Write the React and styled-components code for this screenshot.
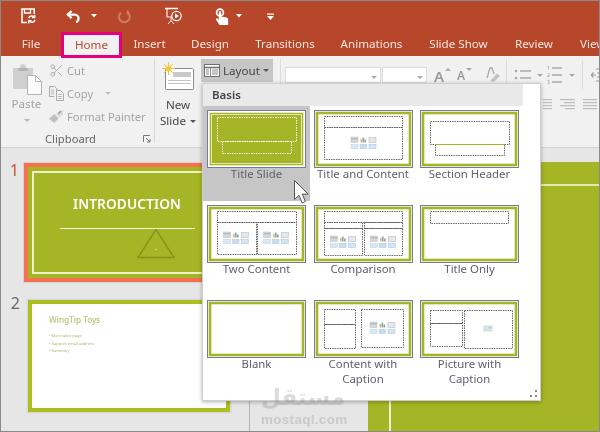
import React from "react";
import styled, { createGlobalStyle } from "styled-components";
import { Scissors } from "lucide-react";

const Global = createGlobalStyle`
  html, body { margin: 0; padding: 0; background: #fff; }
  * { box-sizing: border-box; }
`;

const FONT = `"Noto Sans", "Open Sans", sans-serif`;
const GREEN = "#a6b525";
const RED = "#b7472a";

const Screen = styled.div`
  position: relative; width: 600px; height: 432px; overflow: hidden;
  border: 1px solid #8a8a8a; background: #e6e6e6;
  font-family: ${FONT}; display: flex; flex-direction: column;
  filter: blur(0.35px);
`;
const TitleBar = styled.header`
  background: ${RED}; height: 55px; flex: none; display: flex; flex-direction: column;
`;
const Qat = styled.div`
  height: 30px; display: flex; align-items: center; padding-left: 20px;
`;
const QatIcon = styled.svg`
  flex: none; margin-left: ${p => p.$ml || 0}px; display: block;
`;
const Tabs = styled.nav`
  height: 25px; display: flex; font-size: 11.6px; color: #f8e6e0;
`;
const Tab = styled.div`
  flex: none; width: ${p => p.$w}px; height: 25px; display: flex; align-items: center;
  justify-content: center; white-space: nowrap;
`;
const ActiveTab = styled(Tab)`
  height: 26px; margin-top: 1px; padding-bottom: 1px; background: #f1f1f1; color: ${RED};
  border: 3px solid #e6007e; position: relative; z-index: 2;
`;
const EdgeTab = styled(Tab)`
  justify-content: flex-start; padding-left: 13px;
`;
const Ribbon = styled.section`
  height: 92px; flex: none; background: #f1f1f1; border-bottom: 1px solid #d3d3d3;
  display: flex; align-items: flex-start; font-size: 11.6px; color: #a3a3a3;
`;
const ClipboardGroup = styled.div`
  width: 154px; height: 84px; margin-top: 3px; flex: none; border-right: 1px solid #d8d8d8;
  display: flex; flex-direction: column;
`;
const ClipboardBody = styled.div`
  display: flex; height: 69px;
`;
const PasteCol = styled.div`
  width: 48px; flex: none; display: flex; flex-direction: column; align-items: center;
  padding-top: 5px; padding-left: 3px; line-height: 16px;
`;
const PasteLabel = styled.span`
  margin: 1px 0 7px;
`;
const ClipRows = styled.div`
  display: flex; flex-direction: column;
`;
const ClipRow = styled.div`
  height: 23px; display: flex; align-items: center; gap: 3px; white-space: nowrap; font-size: 11.2px;
`;
const GroupLabel = styled.div`
  position: relative; text-align: center; font-size: 11.2px; color: #666; line-height: 16px;
  margin-top: 3px; padding-right: 14px;
`;
const Launcher = styled.svg`
  position: absolute; right: 3px; top: 4px;
`;
const NewCol = styled.div`
  width: 43px; margin-top: 6px; flex: none; display: flex; flex-direction: column; align-items: center;
  color: #444; line-height: 16px; padding-left: 3px;
`;
const NewLabel = styled.span`
  margin-top: 7px;
`;
const LayoutBtn = styled.div`
  width: 72px; height: 23px; margin: 3px 0 0 3px; flex: none; background: #c6c6c6;
  display: flex; align-items: center; gap: 3px; padding-left: 3px; color: #444;
`;
const Caret = styled.span`
  display: inline-block; flex: none; width: 0; height: 0; margin-left: ${p => p.$ml || 0}px;
  border-left: 3px solid transparent; border-right: 3px solid transparent;
  border-top: 3px solid ${p => p.$c || "#555"};
  vertical-align: ${p => (p.$inline ? "2px" : "baseline")};
  margin-top: ${p => p.$mt || 0}px;
  transform: ${p => (p.$up ? "rotate(180deg)" : "none")};
`;
const FontGroup = styled.div`
  margin: 3px 0 0 7px; height: 84px; width: 227px; flex: none; border-left: 1px solid #dcdcdc;
  border-right: 1px solid #dcdcdc; padding: 8px 0 0 4px; display: flex; align-items: flex-start;
`;
const SelectBox = styled.div`
  height: 16px; width: ${p => p.$w}px; margin-right: 1px; background: #fff; border: 1px solid #dcdcdc;
  display: flex; align-items: flex-end; justify-content: flex-end; padding: 0 3px 3px 0; flex: none;
`;
const GrowA = styled.span`
  display: flex; align-items: flex-start; width: ${p => p.$w}px; margin-left: ${p => p.$ml || 0}px;
  font-size: ${p => p.$s}px; line-height: 18px; color: #9a9a9a; font-weight: 600; flex: none; gap: 1px;
`;
const ParaGroup = styled.div`
  flex: 1; display: flex; flex-direction: column; padding-top: 9px;
`;
const ParaRow = styled.div`
  display: flex; align-items: center; padding-left: 7px; height: 20px;
`;
const ParaGap = styled.span`
  width: 4px; flex: none;
`;
const AlignRow = styled.div`
  display: flex; justify-content: flex-end; gap: 8px; padding-right: 6px; margin-top: 14px;
`;
const IndentSlot = styled.div`
  margin-left: 7px; padding-left: 8px; border-left: 1px solid #dcdcdc; height: 28px; display: flex; align-items: center;
`;
const Workspace = styled.main`
  flex: 1; display: flex; min-height: 0;
`;
const ThumbPane = styled.aside`
  width: 249px; flex: none; background: #e6e6e6; border-right: 1px solid #b4b4b4;
  padding-top: 15px; display: flex; flex-direction: column; gap: 18px;
`;
const ThumbRow = styled.div`
  display: flex; align-items: flex-start;
`;
const SlideNo = styled.span`
  width: ${p => p.$w}px; flex: none; text-align: right; padding-right: ${p => p.$pr}px; font-size: 16px; line-height: 16px;
  margin-top: ${p => p.$mt}px; color: ${p => p.$c};
`;
const SlideOne = styled.div`
  width: 206px; height: 119px; background: ${GREEN}; border: 4px solid #f6714f; padding: 4px;
  box-shadow: 0 0 0 1px #d4d4d4; flex: none;
`;
const SlideOneFrame = styled.div`
  height: 103px; border: 2px solid #eef2c8; display: flex; flex-direction: column; align-items: center; padding-top: 22px;
`;
const SlideOneTitle = styled.div`
  color: #fff; font-size: 13.7px; font-weight: 600; line-height: 18px; letter-spacing: 0.1px;
`;
const SlideOneRule = styled.div`
  width: 135px; height: 1px; background: #f0f3cf; margin-top: 15px;
`;
const Triangle = styled.svg`
  align-self: flex-start; margin-left: 103px; display: block;
`;
const SlideTwo = styled.div`
  width: 202px; height: 112px; background: #fff; border: 4px solid #aebe22; flex: none;
  box-shadow: 0 0 0 1.5px #d8d8d8; padding: 10px 0 0 17px; color: #b7c272;
`;
const SlideTwoTitle = styled.div`
  font-size: 8.2px; line-height: 12px; margin-bottom: 6px; font-weight: 500;
`;
const SlideTwoItem = styled.div`
  font-size: 4px; line-height: 7.5px; white-space: nowrap; color: #a9b56a;
`;
const MainPane = styled.div`
  flex: 1; display: flex; flex-direction: column; min-width: 0; padding-top: 14px;
`;
const MainRow = styled.div`
  flex: 1; display: flex; padding-left: 118px;
`;
const BigSlide = styled.div`
  flex: 1; background: ${GREEN}; padding: 22px 0 0 21px; display: flex;
`;
const BigSlideFrame = styled.div`
  flex: 1; border-top: 2px solid #e4e9b4; border-left: 2px solid #eef1d0;
`;
const Menu = styled.div`
  position: absolute; left: 201px; top: 82px; width: 339px; height: 318px; background: #fff; z-index: 3;
  border: 1px solid #cfcfcf; box-shadow: 0 1px 4px rgba(0,0,0,.3);
  display: flex; flex-direction: column;
`;
const MenuHead = styled.div`
  width: 320px; height: 22px; flex: none; background: #e9e9e9; color: #444; font-size: 11.5px; font-weight: 600;
  line-height: 22px; padding-left: 9px;
`;
const LayoutGrid = styled.div`
  display: grid; grid-template-columns: 107px 106px 107px; grid-auto-rows: 95px;
`;
const LayoutCell = styled.div`
  position: relative; display: flex; flex-direction: column; align-items: center; padding-top: 4px;
  background: ${p => (p.$active ? "#c6c6c6" : "transparent")};
`;
const ThumbSvg = styled.svg`
  display: block; flex: none;
`;
const Caption = styled.div`
  font-size: 11.4px; line-height: 15px; margin-top: -2px; text-align: center; color: #5c5f6e; width: 100px;
`;
const Cursor = styled.svg`
  position: absolute; left: 91px; top: 74px; z-index: 4;
`;
const Grip = styled.svg`
  position: absolute; right: 2px; bottom: 2px;
`;
const Watermark = styled.div`
  position: absolute; left: 260px; top: 383px; width: 79px; z-index: 5; text-align: center;
  color: rgba(130,130,130,.28); font-family: "DejaVu Sans", ${FONT}; font-weight: 700;
`;
const WmArabic = styled.div`
  font-size: 23px; line-height: 26px; margin-bottom: 3px;
`;
const WmLatin = styled.div`
  font-family: "Liberation Sans", sans-serif; font-size: 13.4px; line-height: 14px; letter-spacing: 0.35px;
`;

const DASH = "#5f5f5f";
const ContentGlyphs = ({ x, y }) => (
  <g transform={`translate(${x} ${y})`}>
    <rect x="0" y="0" width="7" height="5.5" fill="#d4d8da" stroke="#b9bfc2" strokeWidth=".5" />
    <rect x="0" y="1.3" width="7" height="1" fill="#aab0b4" />
    <rect x="9.5" y="2" width="1.6" height="3.5" fill="#e8b93a" />
    <rect x="11.5" y="0.5" width="1.6" height="5" fill="#7ea6cc" />
    <rect x="13.5" y="2.5" width="1.6" height="3" fill="#9a9a9a" />
    <rect x="18" y="0.5" width="7" height="5" fill="#e4e8ea" stroke="#aeb4b8" strokeWidth=".5" />
    <rect x="0" y="7.5" width="7" height="4" fill="#dbe7f2" stroke="#b8cfe2" strokeWidth=".5" />
    <rect x="9" y="7.5" width="6.5" height="4" fill="#c7dcef" stroke="#a9c7e2" strokeWidth=".5" />
    <rect x="18" y="7.5" width="7" height="4" fill="#d6e5f2" stroke="#9cc0de" strokeWidth=".5" />
  </g>
);

const LAYOUTS = [
  { name: "Title Slide", fill: true, boxes: [[10, 7, 79, 24], [15, 31, 69, 12]] },
  { name: "Title and Content", boxes: [[10, 6, 78, 11], [10, 17, 78, 32]], glyphs: [[37, 27]] },
  { name: "Section Header", boxes: [[10, 11, 79, 23], [15, 34, 69, 11]], rule: [15, 84, 34] },
  { name: "Two Content", boxes: [[10, 6, 79, 11], [10, 17, 39, 32], [50, 17, 39, 32]], glyphs: [[16.5, 27], [56.5, 27]] },
  { name: "Comparison", boxes: [[10, 6, 78, 11], [10, 17, 38, 6], [50, 17, 38, 6], [10, 23, 38, 27], [50, 23, 38, 27]], glyphs: [[16.5, 31], [56.5, 31]] },
  { name: "Title Only", boxes: [[10, 6, 78, 12]] },
  { name: "Blank", boxes: [] },
  { name: ["Content with", "Caption"], boxes: [[10, 9, 31, 15], [10, 24, 31, 24], [47, 9, 42, 38]], glyphs: [[56, 22]] },
  { name: ["Picture with", "Caption"], boxes: [[10, 10, 32, 13], [10, 23, 32, 23], [44, 10, 48, 38]], pic: [64, 26] },
];

const LayoutThumb = ({ fill, boxes, rule, glyphs, pic }) => (
  <ThumbSvg width="99" height="58" viewBox="0 0 99 58">
    <rect x=".5" y=".5" width="98" height="57" fill="#fff" stroke="#757c98" />
    <rect x="3" y="3" width="93" height="52" fill={fill ? GREEN : "#fff"} stroke={fill ? "none" : "#a6b525"} strokeWidth="2.6" />
    {fill && <rect x="2.5" y="2.5" width="94" height="53" fill={GREEN} stroke="#e9eec0" strokeWidth="1" />}
    {fill && <rect x="4.5" y="4.5" width="90" height="49" fill={GREEN} stroke="#f1f4d6" strokeWidth=".8" />}
    {boxes.map((b, i) => (
      <rect key={i} x={b[0] + .5} y={b[1] + .5} width={b[2]} height={b[3]} fill="none"
        stroke={fill ? "#fff" : DASH} strokeWidth="1" strokeDasharray="1.4 1" />
    ))}
    {rule && <line x1={rule[0]} x2={rule[1]} y1={rule[2] + .5} y2={rule[2] + .5} stroke={GREEN} strokeWidth="1" />}
    {glyphs && glyphs.map((g, i) => <ContentGlyphs key={i} x={g[0]} y={g[1]} />)}
    {pic && (
      <g>
        <rect x={pic[0]} y={pic[1]} width="8" height="5" fill="#d6e5f2" stroke="#b1c9de" strokeWidth=".6" />
        <rect x={pic[0] + 4.5} y={pic[1] + 1} width="2.5" height="1.6" fill="#e8c860" />
      </g>
    )}
  </ThumbSvg>
);

const SaveIcon = () => (
  <QatIcon width="15" height="16" viewBox="0 0 15 16" fill="none" stroke="#fff">
    <path d="M6 14.5H1V1h12.2v5" strokeWidth="1.6" />
    <path d="M3.5 1v4h6V1" strokeWidth="1.3" />
    <path d="M7.6 10.2a3.3 3.3 0 0 1 5.6-1.2M14 12a3.3 3.3 0 0 1-5.6 1.2" strokeWidth="1.5" />
    <path d="M13.8 6.8v2.8h-2.8M7.7 15.4v-2.8h2.8" strokeWidth="1.2" />
  </QatIcon>
);
const UndoIcon = () => (
  <QatIcon $ml={30} width="15" height="13" viewBox="0 0 15 13" fill="none" stroke="#fff" strokeWidth="2.3">
    <path d="M5.6 1 1.8 4.6l3.8 3.6" />
    <path d="M2 4.6h6.6a4 4 0 0 1 4 4c0 1.8-1.1 3.2-2.6 3.6" />
  </QatIcon>
);
const RedoIcon = () => (
  <QatIcon $ml={21} width="13" height="14" viewBox="0 0 13 14" fill="none" stroke="#cf7c64" strokeWidth="2">
    <path d="M8.7 3A5.4 5.4 0 1 1 3 3.6" />
    <path d="M9.8 1v4.5H12" fill="#cf7c64" strokeWidth="1" />
  </QatIcon>
);
const PresenterIcon = () => (
  <QatIcon $ml={34} width="17" height="18" viewBox="0 0 17 18" fill="none" stroke="#fff">
    <path d="M0 1.5h13" strokeWidth="1.5" />
    <path d="M2 1.5v8.5h5" strokeWidth="1.1" />
    <path d="M6 10v3.5M6 13.5l-3 3.5M6 13.5l3 3.5" strokeWidth="1" />
    <circle cx="11.5" cy="9" r="4.7" strokeWidth="1.2" />
    <path d="M10 6.5v5l4-2.5z" fill="#fff" stroke="none" />
  </QatIcon>
);
const TouchIcon = () => (
  <QatIcon $ml={33} width="14" height="17" viewBox="0 0 14 17" fill="none">
    <circle cx="5" cy="4.5" r="3.4" stroke="#fff" strokeWidth="1.7" />
    <path d="M3.8 4.2c0-1.4 2.4-1.4 2.4 0v4.2l5.2 1.2c1.2.3 1.8 1 1.8 2.2V17H4.6L1 11.8c-.5-1 .8-2 1.6-1.2l1.2 1.1z" fill="#fff" />
  </QatIcon>
);
const QatCaret = ({ ml }) => (
  <QatIcon $ml={ml} width="6" height="4" viewBox="0 0 6 4"><path d="M0 0h6L3 3.5z" fill="#fff" /></QatIcon>
);
const CustomizeIcon = () => (
  <QatIcon $ml={25} width="7" height="7" viewBox="0 0 7 7">
    <path d="M0 .5h7v1.3H0zM0 3h7L3.5 7z" fill="#fff" />
  </QatIcon>
);

const PasteIcon = () => (
  <svg width="30" height="31" viewBox="0 0 30 31" style={{ display: "block" }}>
    <path d="M1 4h7V2.5C8 1 9.5 0 11 0s3 1 3 2.5V4h7v21H1z" fill="#cfcfcf" />
    <path d="M6 4h10v3H6z" fill="#b5b5b5" />
    <path d="M15.5 11.5h8l6 6v13h-14z" fill="#fbfbfb" stroke="#b4b4b4" />
    <path d="M23.5 11.5v6h6" fill="none" stroke="#b4b4b4" />
  </svg>
);
const CopyIcon = () => (
  <svg width="15" height="15" viewBox="0 0 15 15" fill="none" stroke="#a9a9a9" style={{ display: "block" }}>
    <path d="M5 10.5H.5V.5h5l2 2v1.5" />
    <path d="M7.5 4.5h4l3 3v7h-7z" fill="#f5f5f5" />
    <path d="M2 4h3M2 6h3M2 8h3M9 8.5h4M9 10.5h4M9 12.5h4" strokeWidth=".8" />
  </svg>
);
const BrushIcon = () => (
  <svg width="15" height="13" viewBox="0 0 15 13" style={{ display: "block" }}>
    <path d="M0 8.5 5.5 4l4 4.5L5 13z" fill="#bfbfbf" />
    <path d="M7 4l3-2.5 4.5-1.5-1 4.5L10 7.5z" fill="#d8d8d8" />
    <path d="M9.5 3.5 12 1" stroke="#999" strokeWidth="1.5" />
  </svg>
);
const NewSlideIcon = () => (
  <svg width="32" height="28" viewBox="0 0 32 28" style={{ display: "block" }}>
    <rect x="3.5" y="6.5" width="28" height="21" rx="1" fill="#fff" stroke="#8b8b8b" />
    <rect x="11" y="10" width="18" height="5" fill="#c9c9c9" />
    <path d="M6 18.5h23M6 21.5h23" stroke="#c4c4c4" />
    <circle cx="6.5" cy="6.5" r="3.2" fill="#f6d95c" />
    <path d="M6.5 0v13M0 6.5h13M2 2l9 9M11 2l-9 9" stroke="#eec63f" strokeWidth="1" />
  </svg>
);
const LayoutIcon = () => (
  <svg width="16" height="13" viewBox="0 0 16 13" fill="none" stroke="#6e6e6e" style={{ display: "block" }}>
    <rect x=".5" y=".5" width="15" height="12" fill="#fff" />
    <path d="M.5 3.5h15" strokeWidth="1.5" />
    <path d="M6.5 4v8.5M2 6h3M2 8h3M2 10h3M8 6h6M8 8h6M8 10h6" strokeWidth=".8" />
  </svg>
);
const BulletIcon = () => (
  <svg width="18" height="14" viewBox="0 0 18 14" fill="none" stroke="#a9a9a9" style={{ display: "block" }}>
    <path d="M6 3h11M6 10h11" strokeWidth="1.3" />
    <circle cx="2" cy="3" r="1.3" fill="#a9a9a9" stroke="none" />
    <circle cx="2" cy="10" r="1.3" fill="#a9a9a9" stroke="none" />
  </svg>
);
const NumberIcon = () => (
  <svg width="15" height="20" viewBox="0 0 15 20" fill="none" stroke="#a9a9a9" style={{ display: "block" }}>
    <path d="M5 3h10M5 10h10M5 17h10" strokeWidth="1.3" />
    <text x="0" y="5" fontSize="5" fill="#999" stroke="none" fontFamily="Noto Sans">1</text>
    <text x="0" y="12" fontSize="5" fill="#999" stroke="none" fontFamily="Noto Sans">2</text>
    <text x="0" y="19" fontSize="5" fill="#999" stroke="none" fontFamily="Noto Sans">3</text>
  </svg>
);
const AlignIcon = ({ right, w = 14 }) => (
  <svg width={w} height="11" viewBox={`0 0 ${w} 11`} stroke="#bdbdbd" strokeWidth="1.2" style={{ display: "block" }}>
    <path d={`M0 .6h${w}`} />
    <path d={right ? `M4 3.6h${w - 4}` : `M0 3.6h${w}`} />
    <path d={`M0 6.6h${w}`} />
    <path d={right ? `M5 9.6h${w - 5}` : `M0 9.6h${w}`} />
  </svg>
);
const ClearIcon = () => (
  <svg width="16" height="15" viewBox="0 0 16 15" style={{ display: "block" }}>
    <path d="M3 11 6 1h2l2 6" fill="none" stroke="#a9a9a9" strokeWidth="1.3" />
    <path d="M6 14 13 6.5l3 2.5-6 6z" fill="#c4c4c4" />
  </svg>
);

export default function App() {
  return (
    <>
      <Global />
      <Screen>
        <TitleBar>
          <Qat>
            <SaveIcon />
            <UndoIcon />
            <QatCaret ml={10} />
            <RedoIcon />
            <PresenterIcon />
            <TouchIcon />
            <QatCaret ml={7} />
            <CustomizeIcon />
          </Qat>
          <Tabs>
            <Tab $w={60}>File</Tab>
            <ActiveTab $w={61}>Home</ActiveTab>
            <Tab $w={55}>Insert</Tab>
            <Tab $w={66}>Design</Tab>
            <Tab $w={84}>Transitions</Tab>
            <Tab $w={89}>Animations</Tab>
            <Tab $w={85}>Slide Show</Tab>
            <Tab $w={66}>Review</Tab>
            <EdgeTab $w={32}>View</EdgeTab>
          </Tabs>
        </TitleBar>
        <Ribbon>
          <ClipboardGroup>
            <ClipboardBody>
              <PasteCol>
                <PasteIcon />
                <PasteLabel>Paste</PasteLabel>
                <Caret $c="#b5b5b5" />
              </PasteCol>
              <ClipRows>
                <ClipRow><Scissors size={15} color="#a5a5a5" strokeWidth={1.4} />Cut</ClipRow>
                <ClipRow><CopyIcon />Copy<Caret $c="#c0c0c0" $ml={9} /></ClipRow>
                <ClipRow><BrushIcon />Format Painter</ClipRow>
              </ClipRows>
            </ClipboardBody>
            <GroupLabel>
              Clipboard
              <Launcher width="8" height="8" viewBox="0 0 8 8" fill="none" stroke="#777">
                <path d="M.5 7V.5H7" />
                <path d="M3 3l4 4M7 4v3H4" />
              </Launcher>
            </GroupLabel>
          </ClipboardGroup>
          <NewCol>
            <NewSlideIcon />
            <NewLabel>New</NewLabel>
            <span>Slide <Caret $ml={1} $inline /></span>
          </NewCol>
          <LayoutBtn><LayoutIcon />Layout<Caret /></LayoutBtn>
          <FontGroup>
            <SelectBox $w={96}><Caret $c="#aaa" /></SelectBox>
            <SelectBox $w={45}><Caret $c="#aaa" /></SelectBox>
            <GrowA $s={15} $w={22} $ml={6}>A<Caret $c="#aaa" $mt={1} $up /></GrowA>
            <GrowA $s={12} $w={27} $ml={1}>A<Caret $c="#aaa" $mt={1} /></GrowA>
            <ClearIcon />
          </FontGroup>
          <ParaGroup>
            <ParaRow>
              <BulletIcon />
              <Caret $c="#aaa" $ml={5} />
              <ParaGap />
              <NumberIcon />
              <Caret $c="#aaa" $ml={7} />
              <IndentSlot>
                <svg width="12" height="14" viewBox="0 0 12 14" fill="none" stroke="#9a9a9a" strokeWidth="1.2">
                  <path d="M5 1h7M6 5h6M6 9h6M5 13h7M0 7h5M2.5 4.5 0 7l2.5 2.5" />
                </svg>
              </IndentSlot>
            </ParaRow>
            <AlignRow>
              <AlignIcon w={9} />
              <AlignIcon right w={15} />
              <AlignIcon w={14} />
            </AlignRow>
          </ParaGroup>
        </Ribbon>
        <Workspace>
          <ThumbPane>
            <ThumbRow>
              <SlideNo $w={23} $pr={5} $mt={-1} $c="#c9553a">1</SlideNo>
              <SlideOne>
                <SlideOneFrame>
                  <SlideOneTitle>INTRODUCTION</SlideOneTitle>
                  <SlideOneRule />
                  <Triangle width="38" height="30" viewBox="0 0 38 30" fill="none" stroke="#86931b" strokeWidth="1.4">
                    <path d="M19 .5 1 28.5h36z" />
                    <circle cx="19" cy="20.5" r=".8" fill="#dfe59a" stroke="none" />
                  </Triangle>
                </SlideOneFrame>
              </SlideOne>
            </ThumbRow>
            <ThumbRow>
              <SlideNo $w={27} $pr={8} $mt={-5} $c="#666">2</SlideNo>
              <SlideTwo>
                <SlideTwoTitle>WingTip Toys</SlideTwoTitle>
                <SlideTwoItem>• Main sales page</SlideTwoItem>
                <SlideTwoItem>• Support email address</SlideTwoItem>
                <SlideTwoItem>• Summary</SlideTwoItem>
              </SlideTwo>
            </ThumbRow>
          </ThumbPane>
          <MainPane>
            <MainRow>
              <BigSlide><BigSlideFrame /></BigSlide>
            </MainRow>
          </MainPane>
        </Workspace>
        <Menu>
          <MenuHead>Basis</MenuHead>
          <LayoutGrid>
            {LAYOUTS.map((l, i) => (
              <LayoutCell key={i} $active={i === 0}>
                <LayoutThumb {...l} />
                <Caption>
                  {Array.isArray(l.name) ? l.name.map(n => <div key={n}>{n}</div>) : l.name}
                </Caption>
                {i === 0 && (
                  <Cursor width="15" height="24" viewBox="0 0 15 24">
                    <path d="M.5.5v19l4.5-4.2 3.2 7.6 3.2-1.4-3.2-7.4h6z" fill="#fff" stroke="#555" strokeWidth="1" />
                  </Cursor>
                )}
              </LayoutCell>
            ))}
          </LayoutGrid>
          <Grip width="8" height="8" viewBox="0 0 8 8" fill="#888">
            <rect x="5" y="0" width="2" height="2" />
            <rect x="0" y="5" width="2" height="2" />
            <rect x="5" y="5" width="2" height="2" />
          </Grip>
        </Menu>
        <Watermark>
          <WmArabic>مستقل</WmArabic>
          <WmLatin>mostaql.com</WmLatin>
        </Watermark>
      </Screen>
    </>
  );
}
